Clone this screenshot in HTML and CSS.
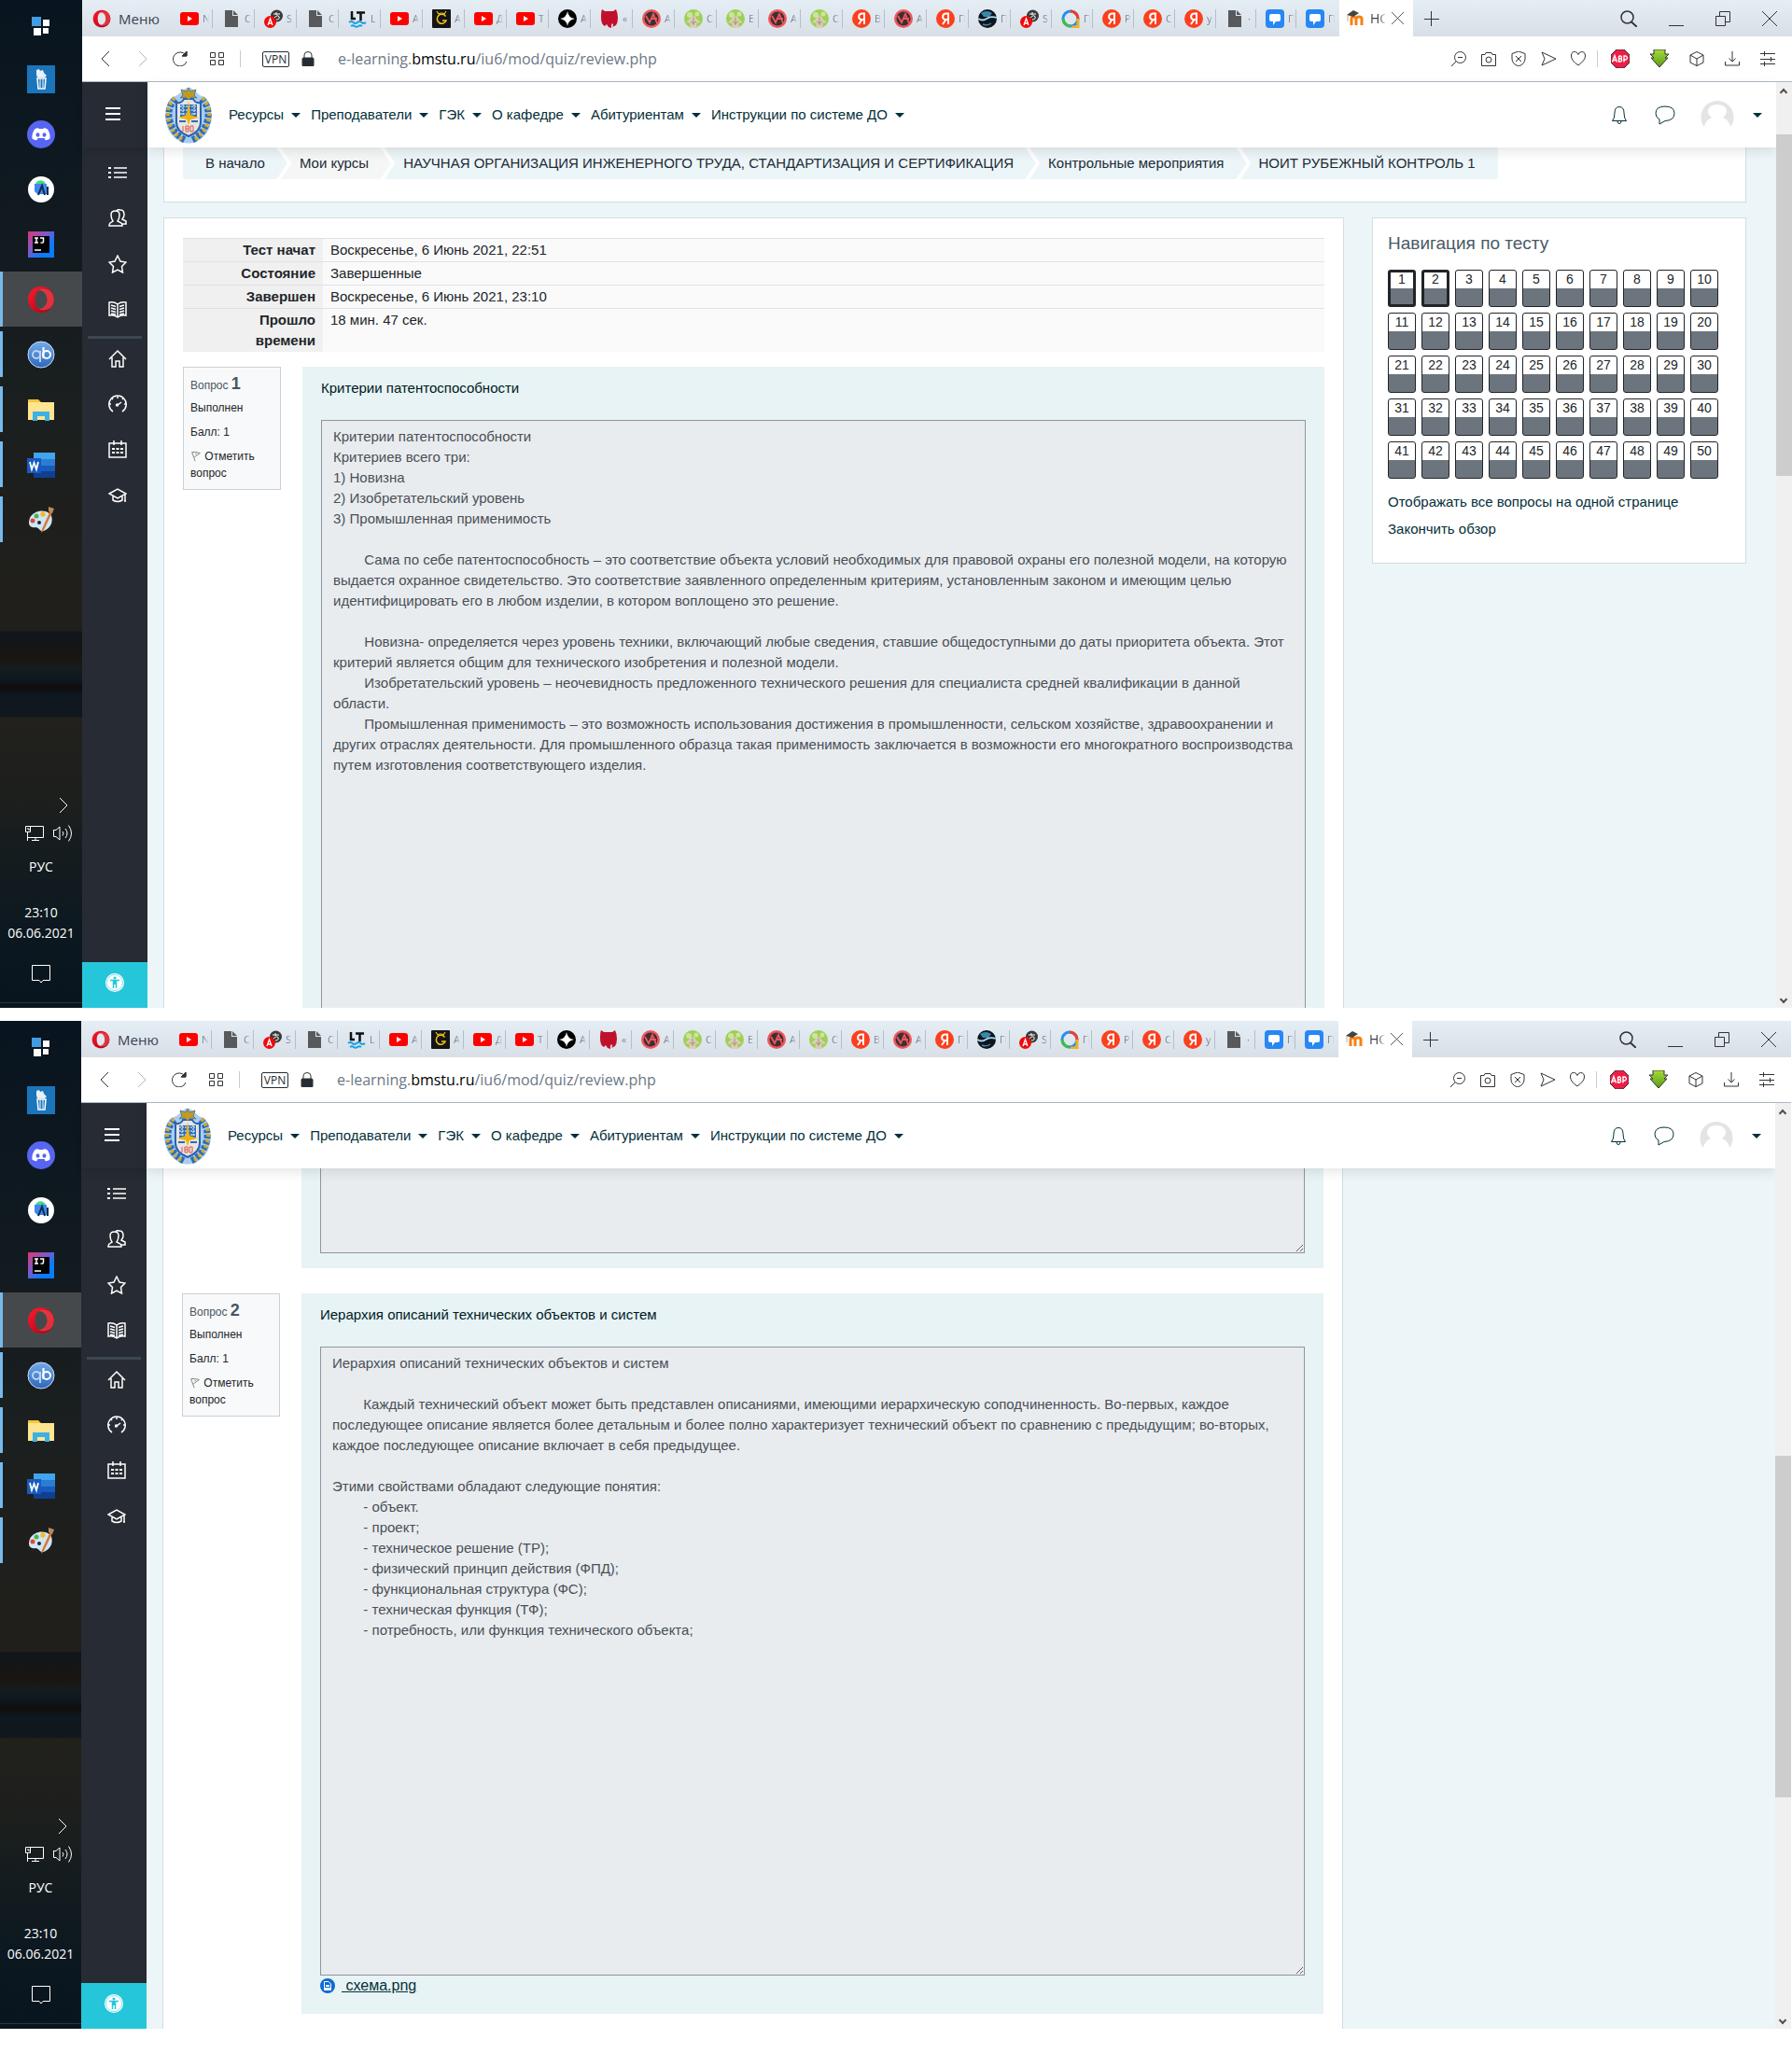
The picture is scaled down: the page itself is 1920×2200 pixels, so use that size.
FILE: index.html
```html
<!DOCTYPE html>
<html lang="ru">
<head>
<meta charset="utf-8">
<title>НОИТ РУБЕЖНЫЙ КОНТРОЛЬ 1</title>
<link rel="stylesheet" href="styles.css">
<script src="app.js" defer></script>
</head>
<body>
<svg class="defs" aria-hidden="true">
  <defs>
    <linearGradient id="gOpera" x1="0" y1="0" x2="1" y2="1"><stop offset="0" stop-color="#ff1b2d"/><stop offset="1" stop-color="#a70014"/></linearGradient>
    <linearGradient id="gIdea" x1="0" y1="0" x2="1" y2="1"><stop offset="0" stop-color="#e0356f"/><stop offset=".4" stop-color="#7d5ac8"/><stop offset=".7" stop-color="#087cfa"/></linearGradient>
    <linearGradient id="gQb" x1="0" y1="0" x2="0" y2="1"><stop offset="0" stop-color="#72abe8"/><stop offset="1" stop-color="#2f66bd"/></linearGradient>
    <linearGradient id="gDown" x1="0" y1="0" x2="0" y2="1"><stop offset="0" stop-color="#a4dc3c"/><stop offset="1" stop-color="#5c9a14"/></linearGradient>
  </defs>
  <symbol id="start" viewBox="0 0 20 20"><path d="M0 0h10v10H0z" fill="#429ce3"/><path d="M12 3h7v7h-7zM2 12h8v8H2zM12 12h6v6h-6z" fill="#fff"/></symbol>
  <symbol id="trash" viewBox="0 0 30 30"><path d="M0 0h30v30H0z" fill="#1b75bb"/><path d="M10 5l3-1 1 2 3-1 1 3 3 3-2 2h-8L10 10z" fill="#e8f1f8"/><path d="M11 14h9l-1 11h-7z" fill="none" stroke="#fff" stroke-width="1.500"/><path d="M14 14v10M17 14v10" stroke="#fff"/></symbol>
  <symbol id="discord" viewBox="0 0 30 30"><circle cx="15" cy="15" r="15" fill="#5865f2"/><path d="M8 9.500c3-2 4-1.500 5-.5h4c1-1 2-1.500 5 .5 2 3 3 7 2.500 10-2 1.500-4 2-5 1.500l-1-2h-7l-1 2c-1 .5-3 0-5-1.500C5 16.500 6 12.500 8 9.500z" fill="#fff"/><ellipse cx="11.500" cy="15.500" rx="2" ry="2.300" fill="#5865f2"/><ellipse cx="18.500" cy="15.500" rx="2" ry="2.300" fill="#5865f2"/></symbol>
  <symbol id="studio" viewBox="0 0 30 30"><circle cx="15" cy="15" r="14" fill="#fff"/><path d="M8 9h13v11H11l-3-3z" fill="#4285f4"/><path d="M9 9c2-5 9-5 11 0z" fill="#3ddc84"/><path d="M12 21l4-10 3 10M22 12v9" fill="none" stroke="#073042" stroke-width="2"/></symbol>
  <symbol id="idea" viewBox="0 0 30 30"><path d="M1 1h28v28H1z" fill="url(#gIdea)"/><path d="M6 6h18v18H6z" fill="#000"/><path d="M8 8h4M8 13h4M10 8v5M14 8h3.500v4q0 1.500-3 1M8 21h7" stroke="#fff" stroke-width="1.500" fill="none"/></symbol>
  <symbol id="opera" viewBox="0 0 30 30"><path fill-rule="evenodd" d="M15 1C7 1 1 7 1 15s6 14 14 14 14-6 14-14S23 1 15 1zm0 3.500c4 0 6.500 4.500 6.500 10.500S19 25.500 15 25.500 8.500 21 8.500 15 11 4.500 15 4.500z" fill="url(#gOpera)"/><path d="M12 5c4-3 10-1 13 1 5 5 5 14 0 18-4 3-9 3-13 1 6 0 9.500-5 9.500-10S18 5 12 5z" fill="#e8414b" opacity=".75"/></symbol>
  <symbol id="qb" viewBox="0 0 30 30"><circle cx="15" cy="15" r="14" fill="url(#gQb)" stroke="#c9ddf4"/><circle cx="10" cy="15" r="4" fill="none" stroke="#b9d4f2" stroke-width="2"/><path d="M14 11v12" stroke="#b9d4f2" stroke-width="2"/><path d="M17.500 7v12" stroke="#fff" stroke-width="2"/><circle cx="21" cy="15" r="4" fill="none" stroke="#fff" stroke-width="2"/></symbol>
  <symbol id="folder" viewBox="0 0 30 30"><path d="M1 4h11l3 3h14v19H1z" fill="#f5c63c"/><path d="M1 7h28v19H1z" fill="#ffe592"/><path d="M6 27V17h18v10h-5v-5h-8v5z" fill="#3db0e4"/></symbol>
  <symbol id="word" viewBox="0 0 30 30"><path d="M7 2h23v7H7z" fill="#41a5ee"/><path d="M7 9h23v7H7z" fill="#2b7cd3"/><path d="M7 16h23v6H7z" fill="#185abd"/><path d="M7 22h23v7H7z" fill="#103f91"/><path d="M0 8h15v16H0z" fill="#185abd"/><path d="M3 12l2 8 2.500-7L10 20l2-8" fill="none" stroke="#fff" stroke-width="1.800"/></symbol>
  <symbol id="paint" viewBox="0 0 30 30"><path d="M3 13C7 5 19 3 25 9c4 6 1 15-7 18-5 1-5-4-9-4-5 1-9-2-6-10z" fill="#cfe6f5"/><circle cx="6" cy="16" r="2.500" fill="#e2483c"/><circle cx="10" cy="11" r="2.500" fill="#4eb04a"/><circle cx="17" cy="9" r="2.700" fill="#f5b92a"/><circle cx="13" cy="18" r="2" fill="#1d2b38"/><path d="M25 5l2 2-9 19-3 3 1-4z" fill="#d9762e"/><path d="M23 1l6 2-2 5-4-2z" fill="#b98a5c"/></symbol>
  <symbol id="yt" viewBox="0 0 20 20"><rect y="3" width="20" height="14" rx="3" fill="#f00"/><path d="M8 7l5 3-5 3z" fill="#fff"/></symbol>
  <symbol id="doc" viewBox="0 0 20 20"><path d="M3 1h8v6h6v12H3zM12 1l5 5h-5z" fill="#58595b"/></symbol>
  <symbol id="tr" viewBox="0 0 20 20"><circle cx="13.500" cy="7" r="6.500" fill="#3a3a3a"/><path d="M10 5h7M13 3v3M11 9q4-4 5-1t-3 3" stroke="#fff" fill="none"/><circle cx="6.500" cy="13.500" r="6.500" fill="#f00a0a"/><path d="M4 17l2.500-7L9 17M5 15h3" stroke="#fff" stroke-width="1.300" fill="none"/></symbol>
  <symbol id="lt" viewBox="0 0 20 20"><path d="M4 2v8h4M9 3.500h9M13.500 3v9" stroke="#111" stroke-width="2.500" fill="none"/><path d="M1 14q2.500-2 4.500 0t4.500 0 4.500 0 4.500 0M3 18q2-1.500 4 0t4 0 4 0" stroke="#17a1e0" stroke-width="2" fill="none"/></symbol>
  <symbol id="gg" viewBox="0 0 20 20"><rect width="20" height="20" rx="1" fill="#151515"/><path d="M5 2l2 3q3-2 6 0l2-3" stroke="#eec21b" stroke-width="1.200" fill="none"/><path d="M14.500 7.500a5 5 0 1 0 .5 4.500h-4" stroke="#eec21b" stroke-width="1.600" fill="none"/></symbol>
  <symbol id="star4" viewBox="0 0 20 20"><circle cx="10" cy="10" r="10" fill="#000"/><path d="M10 2q1 7 8 8-7 1-8 8-1-7-8-8 7-1 8-8z" fill="#fff"/></symbol>
  <symbol id="cat" viewBox="0 0 20 20"><path d="M2 0l3 2h9l3-2q2 4 2 9t-2 8l-4 2q2-3 0-4-2 2-1 5l-3-1-2-3-2 2q-4-2-4-9T2 0z" fill="#c1102b"/></symbol>
  <symbol id="va" viewBox="0 0 20 20"><circle cx="10" cy="10" r="10" fill="#f0575c"/><circle cx="10" cy="10" r="7.500" fill="#3d3034"/><path d="M4 7l4 7 4-9 4 10M10 10h6" stroke="#f0575c" stroke-width="1.800" fill="none"/></symbol>
  <symbol id="tree" viewBox="0 0 20 20"><circle cx="10" cy="10" r="10" fill="#9fcf55"/><circle cx="6" cy="6" r="3" fill="#c9e79a"/><circle cx="14" cy="5" r="2.500" fill="#c9e79a"/><path d="M6 20l1-5-5-1 5-5 2-4 1 4 2-3 1 4 5 4-5 1 1 5z" fill="#dccdb6"/><path d="M10 9v8M7 13l3 2 3-2" stroke="#a08f74" fill="none"/></symbol>
  <symbol id="ya" viewBox="0 0 20 20"><circle cx="10" cy="10" r="10" fill="#fc3f1d"/><path d="M13 16V4.500h-2c-5 0-5 6.500-1 6.500h3M10.500 11L7 16" stroke="#fff" stroke-width="2" fill="none"/></symbol>
  <symbol id="disk" viewBox="0 0 20 20"><circle cx="10" cy="10" r="10" fill="#10141c"/><path d="M3 4q6-4 12 0l-3 4H6z" fill="#3c86ad"/><path d="M0 10q5 3 9 0t11-1" stroke="#a6dcf6" stroke-width="1.800" fill="none"/><path d="M5 16q5 2 9-1" stroke="#3c86ad" stroke-width="1.500" fill="none"/></symbol>
  <symbol id="ring" viewBox="0 0 20 20"><circle cx="10" cy="10" r="8" fill="none" stroke="#2a8cf0" stroke-width="3"/><path d="M10 2a8 8 0 0 1 8 8" stroke="#f03c2e" stroke-width="3" fill="none"/><path d="M2 10a8 8 0 0 0 8 8" stroke="#3cbf4a" stroke-width="3" fill="none"/><path d="M18 10v9h-7" stroke="#f2b01e" stroke-width="3" fill="none"/></symbol>
  <symbol id="msg" viewBox="0 0 20 20"><rect width="20" height="20" rx="4" fill="#2787f5"/><path d="M6 5h8q2 0 2 2v4q0 2-2 2h-3l-3 4v-4H6q-2 0-2-2V7q0-2 2-2z" fill="#fff"/></symbol>
  <symbol id="moodle" viewBox="0 0 20 20"><path d="M5 17v-7q0-2 2-2t3 2v7m0-7q0-2 3-2t3 2v7" stroke="#f98012" stroke-width="3" fill="none"/><path d="M0 6l7-5 6 3-6 4z" fill="#444"/><path d="M1 6v7" stroke="#c9a98a"/></symbol>
  <symbol id="crest" viewBox="0 0 52 62">
    <path d="M20 5q6-7 12 0l6 5q8 2 11 10 3 12 1 20-3 14-16 20-8 3-16 0Q5 54 2 40 0 32 3 20q3-8 11-10z" fill="#a9cdf0"/>
    <path d="M12 14Q2 24 6 38q4 14 16 20M40 14q10 10 6 24-4 14-16 20" fill="none" stroke="#2a6cb8" stroke-width="7" stroke-dasharray="4 2"/>
    <path d="M11 13Q1 24 5 38q4 14 16 20M41 13q10 11 6 25-4 14-16 20" fill="none" stroke="#d6ab25" stroke-width="4" stroke-dasharray="3 3"/>
    <path d="M13 18q6 1 8-4h10q2 5 8 4v21q0 10-13 15-13-5-13-15z" fill="#e8e4e2" stroke="#2a62b0" stroke-width="2"/>
    <path d="M17 20h18v13H17z" fill="#2a6cb8"/><path d="M17 22h18M17 26h18M17 30h18M20 20v12M32 20v12" stroke="#fff" stroke-dasharray="2 1"/>
    <path d="M26 16l2 15 9 3-9 2-2 6-2-6-9-2 9-3z" fill="#efb40c"/><path d="M16 38h7M29 38h7" stroke="#2a6cb8" stroke-width="2"/>
    <path d="M20 43v6M23 43h3v6h-3zM28 43h3v6h-3zM23 46h3" stroke="#dd5349" fill="none"/>
    <path d="M26 2l2 4 6-2-2 6 3 3-6-1-3 3-3-3-6 1 3-3-2-6 6 2z" fill="#c39a20" stroke="#5b7b8f"/>
  </symbol>
  <symbol id="list" viewBox="0 0 20 20"><path d="M0 5h3M0 10h3M0 15h3" stroke-width="2"/><path d="M6 5h14M6 10h14M6 15h14"/></symbol>
  <symbol id="users" viewBox="0 0 20 20"><path d="M5 13Q3 10 3 6q0-4 4.500-4T12 6q0 4-2 7l4 2q1 1 1 3H1q0-2 1-3zM9 2q1-2 4-1 4 0 4 5 0 3-2 5l4 2v3h-4"/></symbol>
  <symbol id="star" viewBox="0 0 20 20"><path d="M10 1l3 6 6 1-4.500 4.500 1 6.500-5.500-3-5.500 3 1-6.500L1 8l6-1z"/></symbol>
  <symbol id="book" viewBox="0 0 20 20"><path d="M10 4Q6 1 1 2v14q5-1 9 2 4-3 9-2V2q-5-1-9 2v14M3 5l5 1.500M3 8l5 1.500M3 11l5 1.500M3 14l5 1M17 5l-5 1.500M17 8l-5 1.500M17 11l-5 1.500M17 14l-5 1"/></symbol>
  <symbol id="home" viewBox="0 0 20 20"><path d="M1 11l9-9 9 9M4 9v10h4v-6h4v6h4V9"/></symbol>
  <symbol id="gauge" viewBox="0 0 20 20"><path d="M5 18A9.200 9.200 0 1 1 15 18M10 11l4-3M10 2v2M1 10h2M17 10h2M4 4l1 1M16 4l-1 1"/><circle cx="9.500" cy="11" r="1"/></symbol>
  <symbol id="cal" viewBox="0 0 20 20"><path d="M1 3h18v15H1zM6 0v5M14 0v5"/><path d="M4 9h3M8.500 9h3M13 9h3M4 13h3M8.500 13h3M13 13h3" stroke-width="2"/></symbol>
  <symbol id="cap" viewBox="0 0 20 20"><path d="M1 8l9-5 9 5-9 5zM5 11v4q5 3 10 0v-4M18 9v7M17 16h2"/></symbol>
  <symbol id="a11y" viewBox="0 0 20 20"><circle cx="10" cy="10" r="10" fill="#fff"/><circle cx="10" cy="10" r="8.500" fill="none" stroke="#8be2ec" stroke-width="1"/><circle cx="10" cy="5" r="1.500" fill="#26c6da"/><path d="M5 7.500l10 0M8.500 8v8M11.500 8v8" stroke="#26c6da" stroke-width="1.500"/><path d="M8 7h4v5H8z" fill="#26c6da"/></symbol>
  <symbol id="back" viewBox="0 0 16 16"><path d="M12 0L4 8l8 8"/></symbol>
  <symbol id="fwd" viewBox="0 0 16 16"><path d="M4 0l8 8-8 8"/></symbol>
  <symbol id="reload" viewBox="0 0 16 16"><path d="M14 4A7.500 7.500 0 1 0 15 11M15 0v5h-5"/><path d="M15 0v5h-5z" fill="#333"/></symbol>
  <symbol id="grid" viewBox="0 0 16 16"><path d="M.5 1.500h5v5h-5zM9.500 1.500h5v5h-5zM.5 9.500h5v5h-5zM9.500 9.500h5v5h-5z"/></symbol>
  <symbol id="lock" viewBox="0 0 14 16"><path d="M3 7V4q0-3.500 4-3.500T11 4v3"/><rect x="1" y="7" width="12" height="9" rx="1" fill="#252c34"/></symbol>
  <symbol id="zoomout" viewBox="0 0 16 16"><circle cx="9.500" cy="6.500" r="6"/><path d="M5 11l-5 5M7 6.500h5"/></symbol>
  <symbol id="cam" viewBox="0 0 16 16"><path d="M.5 3.500H4l1-2h6l1 2h3.500v12H.5z"/><circle cx="8" cy="9" r="3"/></symbol>
  <symbol id="shield" viewBox="0 0 16 16"><path d="M8 0l7 2.500V8q0 5.500-7 8-7-2.500-7-8V2.500zM5 5l6 6M11 5l-6 6"/></symbol>
  <symbol id="send" viewBox="0 0 16 16"><path d="M1 1l15 7-15 7 3-7z"/></symbol>
  <symbol id="heart" viewBox="0 0 16 16"><path d="M8 15Q.5 10 .5 5t4-4.500Q7 .5 8 3.500 9 .5 11.500.5q4 0 4 4.500T8 15z"/></symbol>
  <symbol id="abp" viewBox="0 0 20 20"><path d="M6 0h8l6 6v8l-6 6H6l-6-6V6z" fill="#ed1e45"/><path d="M1.500 13.500l2.500-7 2.500 7M2.500 11.500h3M8.500 7v6h2q2.500-1.500 0-3h-2M8.500 7h2q2 1.500 0 3M14 13.500V7h2q3 2 0 4h-2" fill="none" stroke="#fff" stroke-width="1.400"/></symbol>
  <symbol id="green" viewBox="0 0 20 20"><path d="M4 0h12v5h4l-4 4h3l-9 10L1 9h3L0 5h4z" fill="url(#gDown)"/></symbol>
  <symbol id="cube" viewBox="0 0 16 16"><path d="M8 .5l7 3.500v8l-7 3.500L1 12V4zM1 4l7 4 7-4M8 8v8"/></symbol>
  <symbol id="dl" viewBox="0 0 16 16"><path d="M8 0v11M4.500 7.500L8 11l3.500-3.500M.5 11v4h15v-4"/></symbol>
  <symbol id="sliders" viewBox="0 0 16 16"><path d="M0 2.500h16M0 8.500h16M0 13.500h16M4.500 0v5M11.500 6v5M4.500 11v5"/></symbol>
  <symbol id="search" viewBox="0 0 18 18"><circle cx="7.500" cy="7.500" r="6.500" stroke-width="1.500"/><path d="M12 12.500l6 5.500" stroke-width="2"/></symbol>
  <symbol id="min" viewBox="0 0 16 16"><path d="M0 15.500h16"/></symbol>
  <symbol id="restore" viewBox="0 0 16 16"><path d="M.5 5.500h10v10H.5zM4.500 5V.5h11v11H11"/></symbol>
  <symbol id="close" viewBox="0 0 16 16"><path d="M0 0l16 16M16 0L0 16"/></symbol>
  <symbol id="plus" viewBox="0 0 16 16"><path d="M0 8.500h16M7.500 0v16"/></symbol>
  <symbol id="bell" viewBox="0 0 22 22"><path d="M4 17.500h14.500Q16 15 16 9q0-6.500-5-6.500T6 9q0 6-2.500 8.500zM9 18q0 2.500 2 2.500t2-2.500"/></symbol>
  <symbol id="chat" viewBox="0 0 22 22"><path d="M11 2Q21 2 21 9.500T11 17.500L5 21l0-5Q1 14 1 9.500 1 2 11 2z"/></symbol>
  <symbol id="avatar" viewBox="0 0 36 36"><path d="M4 31A17.500 17.500 0 1 1 32 31Q31 24 24 21q4-3 4-7-1-7-10-7T8 14q0 4 4 7-7 3-8 10z" fill="#e4e4e4"/></symbol>
  <symbol id="monitor" viewBox="0 0 20 16"><path d="M4 .5h15.500v12H2.500V7M.5.5h5v6h-5zM11 13v3M7 15.500h8M2.500 12v4M2 3h2v2"/></symbol>
  <symbol id="sound" viewBox="0 0 20 18"><path d="M0 5.500h3L7 2v14l-4-3.500H.5v-7M10 7q2 2 0 4.500M13 4q4 5 0 10M16.500.5q6 8.500 0 17"/></symbol>
  <symbol id="note" viewBox="0 0 20 20"><path d="M.5.500h19v16H12l-2 2.500-2-2.500H.5z"/></symbol>
  <symbol id="flag" viewBox="0 0 12 16"><path d="M1 3l4 11M1 3q4-1 10 1L4 9M6 4v2" stroke="#777"/></symbol>
  <symbol id="file" viewBox="0 0 16 16"><circle cx="8" cy="8" r="8" fill="#0d6ad0"/><path d="M4.500 3.500H9l2.500 2.500v6.500h-7z" stroke="#fff" fill="none"/><path d="M5 11h6M6 8h4" stroke="#fff" stroke-width="2"/></symbol>
  <symbol id="chev" viewBox="0 0 18 34"><path d="M0 0l12 17L0 34z" fill="var(--from)"/><path d="M2-1l12 18L2 35" fill="none" stroke="#fff" stroke-width="4"/></symbol>
</svg>

<template id="taskbar-template">
  <div class="apps">
    <button class="app" aria-label="Пуск"><svg class="i20"><use href="#start"/></svg></button>
    <button class="app" aria-label="Корзина"><svg class="i30"><use href="#trash"/></svg></button>
    <button class="app" aria-label="Discord"><svg class="i30"><use href="#discord"/></svg></button>
    <button class="app" aria-label="Android Studio"><svg class="i30"><use href="#studio"/></svg></button>
    <button class="app" aria-label="IntelliJ IDEA"><svg class="i30"><use href="#idea"/></svg></button>
    <button class="app app-open app-active" aria-label="Opera"><svg class="i30"><use href="#opera"/></svg></button>
    <button class="app app-open" aria-label="qBittorrent"><svg class="i30"><use href="#qb"/></svg></button>
    <button class="app app-open" aria-label="Проводник"><svg class="i30"><use href="#folder"/></svg></button>
    <button class="app app-open" aria-label="Word"><svg class="i30"><use href="#word"/></svg></button>
    <button class="app app-open" aria-label="Paint"><svg class="i30"><use href="#paint"/></svg></button>
  </div>
  <div class="tray">
    <button class="tray-more line" aria-label="Скрытые значки"><svg class="i16"><use href="#fwd"/></svg></button>
    <div class="tray-row line"><svg class="i20"><use href="#monitor"/></svg><svg class="i20"><use href="#sound"/></svg></div>
    <div class="tray-lang">РУС</div>
    <div class="tray-clock">23:10<br>06.06.2021</div>
    <button class="tray-note line" aria-label="Уведомления"><svg class="i20"><use href="#note"/></svg></button>
  </div>
</template>

<template id="chrome-template">
  <div class="tabbar">
    <button class="menu"><svg class="i20"><use href="#opera"/></svg>Меню</button>
    <div class="tabs"></div>
    <div class="tab-active"><svg class="i20"><use href="#moodle"/></svg><span class="tab-title">НО</span><svg class="i13 line"><use href="#close"/></svg></div>
    <button class="tab-new line" aria-label="Новая вкладка"><svg class="i16"><use href="#plus"/></svg></button>
    <div class="win line">
      <button aria-label="Поиск"><svg class="i18"><use href="#search"/></svg></button>
      <button aria-label="Свернуть"><svg class="i16"><use href="#min"/></svg></button>
      <button aria-label="Восстановить"><svg class="i16"><use href="#restore"/></svg></button>
      <button aria-label="Закрыть"><svg class="i16"><use href="#close"/></svg></button>
    </div>
  </div>
  <div class="toolbar line">
    <div class="tools-left">
      <button aria-label="Назад"><svg class="i16"><use href="#back"/></svg></button>
      <button aria-label="Вперёд" class="dim"><svg class="i16"><use href="#fwd"/></svg></button>
      <button aria-label="Обновить"><svg class="i16"><use href="#reload"/></svg></button>
      <button aria-label="Экспресс-панель"><svg class="i16"><use href="#grid"/></svg></button>
    </div>
    <span class="rule"></span>
    <span class="vpn">VPN</span>
    <svg class="i16 lock"><use href="#lock"/></svg>
    <div class="url">e-learning.<b>bmstu.ru</b>/iu6/mod/quiz/review.php</div>
    <div class="tools-right">
      <svg class="i16"><use href="#zoomout"/></svg><svg class="i16"><use href="#cam"/></svg><svg class="i16"><use href="#shield"/></svg><svg class="i16"><use href="#send"/></svg><svg class="i16"><use href="#heart"/></svg>
    </div>
    <span class="rule"></span>
    <div class="extensions">
      <svg class="i20"><use href="#abp"/></svg><svg class="i20"><use href="#green"/></svg><svg class="i16"><use href="#cube"/></svg><svg class="i16"><use href="#dl"/></svg><svg class="i16"><use href="#sliders"/></svg>
    </div>
  </div>
</template>

<template id="drawer-template">
  <button class="burger" aria-label="Меню"><span></span><span></span><span></span></button>
  <nav class="drawer-nav">
    <a href="#" aria-label="Разделы"><svg class="i20"><use href="#list"/></svg></a>
    <a href="#" aria-label="Участники"><svg class="i20"><use href="#users"/></svg></a>
    <a href="#" aria-label="Значки"><svg class="i20"><use href="#star"/></svg></a>
    <a href="#" aria-label="Оценки"><svg class="i20"><use href="#book"/></svg></a>
    <hr>
    <a href="#" aria-label="Домой"><svg class="i20"><use href="#home"/></svg></a>
    <a href="#" aria-label="Личный кабинет"><svg class="i20"><use href="#gauge"/></svg></a>
    <a href="#" aria-label="Календарь"><svg class="i20"><use href="#cal"/></svg></a>
    <a href="#" aria-label="Мои курсы"><svg class="i20"><use href="#cap"/></svg></a>
  </nav>
  <button class="access" aria-label="Специальные возможности"><svg class="i20"><use href="#a11y"/></svg></button>
</template>

<template id="header-template">
  <a href="#" aria-label="МГТУ"><svg class="crest"><use href="#crest"/></svg></a>
  <nav class="topnav">
    <a href="#">Ресурсы</a><a href="#">Преподаватели</a><a href="#">ГЭК</a><a href="#">О кафедре</a><a href="#">Абитуриентам</a><a href="#">Инструкции по системе ДО</a>
  </nav>
  <div class="user">
    <svg class="i22"><use href="#bell"/></svg><svg class="i22"><use href="#chat"/></svg><button class="account" aria-label="Профиль"><svg class="i36"><use href="#avatar"/></svg></button>
  </div>
</template>

<section class="screen screen-top">
  <aside class="taskbar" data-template="taskbar-template"></aside>
  <div class="browser">
    <div data-template="chrome-template"></div>
    <div class="page">
      <aside class="drawer" data-template="drawer-template"></aside>
      <div class="site">
        <header class="header" data-template="header-template"></header>
        <main class="content">
          <div class="card crumbs-card">
            <nav class="crumbs">
              <a href="#">В начало</a><svg class="chev to-grey"><use href="#chev"/></svg><a href="#" class="grey">Мои курсы</a><svg class="chev from-grey"><use href="#chev"/></svg><a href="#">НАУЧНАЯ ОРГАНИЗАЦИЯ ИНЖЕНЕРНОГО ТРУДА, СТАНДАРТИЗАЦИЯ И СЕРТИФИКАЦИЯ</a><svg class="chev"><use href="#chev"/></svg><a href="#">Контрольные мероприятия</a><svg class="chev"><use href="#chev"/></svg><a href="#">НОИТ РУБЕЖНЫЙ КОНТРОЛЬ 1</a>
            </nav>
          </div>
          <div class="columns">
            <div class="card quiz">
              <table class="summary">
                <tr><th>Тест начат</th><td>Воскресенье, 6 Июнь 2021, 22:51</td></tr>
                <tr><th>Состояние</th><td>Завершенные</td></tr>
                <tr><th>Завершен</th><td>Воскресенье, 6 Июнь 2021, 23:10</td></tr>
                <tr><th>Прошло<br>времени</th><td>18 мин. 47 сек.</td></tr>
              </table>
              <div class="question">
                <div class="info">
                  <h3>Вопрос <b>1</b></h3>
                  <p>Выполнен</p>
                  <p>Балл: 1</p>
                  <a href="#"><svg class="flag"><use href="#flag"/></svg> Отметить вопрос</a>
                </div>
                <div class="formulation">
                  <label for="a1">Критерии патентоспособности</label>
                  <textarea id="a1" class="answer answer-open" readonly>Критерии патентоспособности
Критериев всего три:
1) Новизна
2) Изобретательский уровень
3) Промышленная применимость

        Сама по себе патентоспособность – это соответствие объекта условий необходимых для правовой охраны его полезной модели, на которую
выдается охранное свидетельство. Это соответствие заявленного определенным критериям, установленным законом и имеющим целью
идентифицировать его в любом изделии, в котором воплощено это решение.

        Новизна- определяется через уровень техники, включающий любые сведения, ставшие общедоступными до даты приоритета объекта. Этот
критерий является общим для технического изобретения и полезной модели.
        Изобретательский уровень – неочевидность предложенного технического решения для специалиста средней квалификации в данной
области.
        Промышленная применимость – это возможность использования достижения в промышленности, сельском хозяйстве, здравоохранении и
других отраслях деятельности. Для промышленного образца такая применимость заключается в возможности его многократного воспроизводства
путем изготовления соответствующего изделия.</textarea>
                </div>
              </div>
            </div>
            <aside class="card quiznav">
              <h2>Навигация по тесту</h2>
              <div class="numbers"></div>
              <a href="#">Отображать все вопросы на одной странице</a>
              <a href="#">Закончить обзор</a>
            </aside>
          </div>
        </main>
      </div>
      <div class="scrollbar"><span class="arrow-up"></span><span class="thumb"></span><span class="arrow-down"></span></div>
    </div>
  </div>
</section>

<section class="screen screen-bottom">
  <aside class="taskbar" data-template="taskbar-template"></aside>
  <div class="browser">
    <div data-template="chrome-template"></div>
    <div class="page">
      <aside class="drawer" data-template="drawer-template"></aside>
      <div class="site">
        <header class="header" data-template="header-template"></header>
        <main class="content">
          <div class="columns">
            <div class="card quiz">
              <div class="question">
                <div class="formulation formulation-tail">
                  <textarea class="answer answer-tail" aria-label="Ответ на вопрос 1" readonly></textarea>
                </div>
              </div>
              <div class="question">
                <div class="info">
                  <h3>Вопрос <b>2</b></h3>
                  <p>Выполнен</p>
                  <p>Балл: 1</p>
                  <a href="#"><svg class="flag"><use href="#flag"/></svg> Отметить вопрос</a>
                </div>
                <div class="formulation">
                  <label for="a2">Иерархия описаний технических объектов и систем</label>
                  <textarea id="a2" class="answer answer-full" readonly>Иерархия описаний технических объектов и систем

        Каждый технический объект может быть представлен описаниями, имеющими иерархическую соподчиненность. Во-первых, каждое
последующее описание является более детальным и более полно характеризует технический объект по сравнению с предыдущим; во-вторых,
каждое последующее описание включает в себя предыдущее.

Этими свойствами обладают следующие понятия:
        - объект.
        - проект;
        - техническое решение (ТР);
        - физический принцип действия (ФПД);
        - функциональная структура (ФС);
        - техническая функция (ТФ);
        - потребность, или функция технического объекта;</textarea>
                  <div class="attachment"><svg class="i16"><use href="#file"/></svg><a href="#">&nbsp;схема.png</a></div>
                </div>
              </div>
            </div>
          </div>
        </main>
      </div>
      <div class="scrollbar"><span class="arrow-up"></span><span class="thumb"></span><span class="arrow-down"></span></div>
    </div>
  </div>
</section>
</body>
</html>
```
FILE: app.js
```js
// Fill the shared parts of both windows.
document.querySelectorAll('[data-template]').forEach(function (host) {
  host.append(document.getElementById(host.dataset.template).content.cloneNode(true));
});

// Background tabs: icon and the first letter of the title.
var tabs = ['yt N', 'doc С', 'tr S', 'doc С', 'lt L', 'yt А', 'gg А', 'yt Д', 'yt Т', 'star4 А', 'cat «', 'va А', 'tree О', 'tree Е',
  'va А', 'tree О', 'ya В', 'va А', 'ya П', 'disk П', 'tr S', 'ring П', 'ya Р', 'ya С', 'ya у', 'doc \u00b7', 'msg П', 'msg П'];
document.querySelectorAll('.tabs').forEach(function (bar) {
  bar.innerHTML = tabs.map(function (tab) {
    var part = tab.split(' ');
    return '<div class="tab"><svg class="i20"><use href="#' + part[0] + '"/></svg><span>' + part[1] + '</span></div>';
  }).join('');
});

// Question buttons of the quiz navigation.
var numbers = document.querySelector('.numbers');
for (var n = 1; n <= 50; n++) {
  var link = document.createElement('a');
  link.href = '#';
  link.textContent = n;
  if (n < 3) link.className = 'this-page';
  numbers.append(link);
}
```
FILE: styles.css
```css
* { box-sizing: border-box; }
body { margin: 0; background: #fff; font: 15px/22px "Liberation Sans", Arial, sans-serif; color: #212529; }
a { color: #04303a; text-decoration: none; }
button { margin: 0; padding: 0; border: 0; background: none; font: inherit; color: inherit; }
svg { display: block; flex: none; overflow: visible; }
.defs { position: absolute; width: 0; height: 0; }
.i13 { width: 13px; height: 13px; }
.i16 { width: 16px; height: 16px; }
.i18 { width: 18px; height: 18px; }
.i20 { width: 20px; height: 20px; }
.i22 { width: 22px; height: 22px; }
.i30 { width: 30px; height: 30px; }
.i36 { width: 36px; height: 36px; }
.line { fill: none; stroke: #333; }

.screen { display: flex; }
.screen-bottom { margin: 14px 1px 26px 0; }
.browser { flex: 1; min-width: 0; display: flex; flex-direction: column; }
.page { flex: 1; display: flex; }

/* Desktop taskbar */
.taskbar { width: 88px; display: flex; flex-direction: column; justify-content: space-between; color: #fff;
  background: linear-gradient(#08141f 0, #111a20 240px, #1b1f1f 440px, #211f1b 676px, #0f161b 677px, #1a1512 706px, #161c1e 716px, #0e1820 728px, #100d0b 736px, #0e1820 746px, #11181d 768px, #22211c 769px, #1d1f1d 850px, #141c1f 920px, #0c1820 1000px, #08151e 1074px, #2b353b 1074px, #2b353b 1075px, #08151e 1075px); }
.screen-bottom .taskbar { width: 87px; }
.app { display: flex; align-items: center; justify-content: center; width: 100%; height: 59px; border-left: 3px solid transparent; padding-right: 3px; }
.app:first-child { height: 55px; }
.app-open { border-image: linear-gradient(transparent 5px, #76b9ed 5px, #76b9ed 54px, transparent 54px) 0 0 0 3; }
.app-active { background: #45494b; border-image: linear-gradient(#76b9ed, #76b9ed) 0 0 0 3; }
.tray { display: flex; flex-direction: column; align-items: center; font: 14px/22px "Open Sans", "Noto Sans", sans-serif; padding-bottom: 26px; }
.tray .line { stroke: #fff; }
.tray-more { align-self: flex-end; padding-right: 12px; }
.tray-row { display: flex; gap: 10px; padding-left: 16px; margin-top: 12px; }
.tray-lang { margin-top: 15px; }
.tray-clock { text-align: center; margin-top: 27px; }
.tray-note { margin-top: 23px; }

/* Browser window */
.tabbar { display: flex; height: 39px; background: linear-gradient(#e5edf5, #d8dfe7); font: 16px/24px "Open Sans", "Noto Sans", sans-serif; color: #3a4450; }
.menu { display: flex; align-items: center; gap: 8px; width: 94px; padding-left: 11px; font-size: 15px; }
.tabs { display: flex; align-items: center; padding-right: 4px; }
.tab { display: flex; align-items: center; width: 45px; height: 20px; padding-left: 10px; border-left: 1px solid #b3bfcc; }
.tab:first-child { border-color: transparent; }
.tab:nth-child(n+21) { width: 44px; }
.tab:nth-child(n+26) { width: 43px; }
.tab span { width: 9px; margin-left: 4px; font-size: 11px; line-height: 20px; color: #7b8794; -webkit-mask-image: linear-gradient(90deg, #000 3px, transparent 7px); mask-image: linear-gradient(90deg, #000 3px, transparent 7px); }
.tab-active { display: flex; align-items: center; width: 79px; padding-left: 8px; background: #fff; font-size: 14px; }
.tab-title { width: 22px; margin: 0 1px 0 5px; -webkit-mask-image: linear-gradient(90deg, #000 10px, transparent 17px); mask-image: linear-gradient(90deg, #000 10px, transparent 17px); }
.tab-new { margin-left: 12px; }
.win { display: flex; align-items: center; gap: 34px; margin-left: auto; padding-right: 16px; }
.toolbar { display: flex; align-items: center; height: 49px; padding-right: 18px; background: #fff; border-bottom: 1px solid #adb9c5; }
.tools-left { display: flex; gap: 24px; padding-left: 17px; }
.dim { opacity: .35; }
.rule { width: 1px; height: 18px; background: #c5ccd3; }
.tools-left + .rule { margin: 0 23px 0 16px; }
.vpn { width: 29px; height: 17px; border: 1px solid #252c34; border-radius: 2px; font: 12px/15px "Open Sans", "Noto Sans", sans-serif; text-align: center; color: #252c34; }
.lock { margin: 0 24px 0 12px; }
.url { flex: 1; font: 16px/22px "Open Sans", "Noto Sans", sans-serif; color: #6c7886; }
.url b { font-weight: 400; color: #000; }
.tools-right { display: flex; gap: 16px; padding-right: 12px; }
.extensions { display: flex; align-items: center; gap: 22px; padding-left: 14px; }

/* Site drawer and header */
.drawer { width: 70px; display: flex; flex-direction: column; background: #272b33; }
.burger { display: flex; flex-direction: column; align-items: center; justify-content: center; gap: 4px; height: 70px; padding-right: 4px; padding-bottom: 2px; box-shadow: 0 4px 8px rgba(0, 0, 0, .12); }
.burger span { width: 16px; height: 2px; background: #fff; }
.drawer-nav { display: flex; flex-direction: column; align-items: center; padding: 2px 0 0 6px; }
.drawer-nav a { display: flex; align-items: center; height: 49px; fill: none; stroke: #fff; stroke-width: 1.5; }
.drawer-nav hr { width: 58px; height: 3px; margin: 4px 6px -4px 0; border: 0; background: #3a4750; }
.access { display: flex; justify-content: center; align-items: center; height: 49px; margin-top: auto; padding-bottom: 6px; background: #26c6da; }
.site { flex: 1; min-width: 0; display: flex; flex-direction: column; background: #ecf5f8; }
.header { position: relative; display: flex; align-items: center; height: 70px; padding: 0 15px 0 18px; background: #fff; box-shadow: 0 4px 12px rgba(0, 0, 0, .1); }
.crest { width: 52px; height: 62px; }
.topnav { display: flex; gap: 11px; margin-left: 17px; }
.topnav a { display: flex; align-items: center; gap: 8px; font-size: 15px; }
.topnav a::after, .account::after { content: ""; border: 5px solid transparent; border-top-color: #04303a; border-bottom: 0; }
.user { display: flex; align-items: center; gap: 27px; margin-left: auto; fill: none; stroke: #04303a; }
.account { display: flex; align-items: center; gap: 20px; stroke: none; }

/* Content */
.content { flex: 1; display: flex; flex-direction: column; padding: 0 32px 0 17px; }
.card { background: #fff; border: 1px solid #d3dee2; }
.crumbs-card { margin-bottom: 16px; padding: 0 20px 24px; border-top: 0; }
.crumbs { display: flex; height: 34px; font-size: 15px; line-height: 34px; white-space: nowrap; }
.crumbs a { padding: 0 12px 0 7px; background: #ecf5f8; color: #212b36; }
.crumbs a:first-child { padding-left: 24px; border-radius: 0 0 0 3px; }
.crumbs a:last-child { padding-right: 24px; border-radius: 0 0 3px 0; }
.crumbs .grey { background: #f5f6f6; }
.chev { width: 18px; height: 34px; overflow: hidden; background: #ecf5f8; --from: #ecf5f8; }
.to-grey { background: #f5f6f6; }
.from-grey { --from: #f5f6f6; }
.columns { flex: 1; display: grid; grid-template-columns: minmax(0, 1fr) 401px; gap: 30px; }
.quiz { padding: 21px 20px 0; border-bottom: 0; }
.screen-bottom .quiz { padding-top: 0; border-top: 0; padding-bottom: 16px; }
.summary { width: 100%; border-collapse: collapse; margin-bottom: 16px; }
.summary tr { border-top: 1px solid #dee2e6; }
.summary th { width: 150px; padding: 1px 8px; text-align: right; vertical-align: top; background: #f0f0f0; }
.summary td { padding: 1px 8px; vertical-align: top; background: #fafafa; }
.question { display: grid; grid-template-columns: 105px minmax(0, 1fr); gap: 23px; align-items: start; }
.question + .question { margin-top: 27px; }
.info { height: 132px; padding: 9px 7px; border: 1px solid #cad0d7; background: #f8f9fa; font-size: 12px; line-height: 18px; color: #212529; }
.info h3 { margin: 0 0 6px; font-size: 12px; font-weight: 400; line-height: 18px; color: #4a5560; }
.info h3 b { font-size: 18px; line-height: 16px; }
.info p { margin: 0 0 8px; }
.info a { color: #212529; }
.flag { display: inline-block; width: 12px; height: 14px; vertical-align: -3px; fill: none; }
.formulation { grid-column: 2; padding: 12px 20px 0; background: #e7f3f5; color: #001a1e; }
.formulation label { display: block; margin-bottom: 23px; }
.formulation-tail { padding: 0 20px 16px; }
.answer { display: block; width: 100%; padding: 6px 12px; border: 1px solid #8f959e; border-radius: 0; background: #e9ecef; color: #495057; font: inherit; outline: 0; overflow: hidden; resize: vertical; white-space: pre; }
.answer-open { height: 630px; border-bottom: 0; resize: none; }
.answer-tail { height: 91px; border-top: 0; }
.answer-full { height: 674px; }
.attachment { display: flex; align-items: center; gap: 7px; height: 41px; padding-bottom: 19px; font-size: 16px; }
.attachment a { text-decoration: underline; }
.quiznav { align-self: start; padding: 15px 16px 22px; }
.quiznav h2 { margin: 0 0 16px; font-size: 19px; font-weight: 400; line-height: 24px; color: #4a5a66; }
.numbers { display: grid; grid-template-columns: repeat(10, 30px); gap: 6px; margin-bottom: 10px; }
.numbers a { height: 40px; border: 1px solid #212529; border-radius: 3px; background: linear-gradient(#fff 19px, #6c757d 19px); font-size: 14px; line-height: 18px; text-align: center; color: #212529; }
.numbers .this-page { border-width: 3px; background: linear-gradient(#fff 17px, #6c757d 17px); line-height: 14px; }
.quiznav > a { display: block; height: 29px; line-height: 29px; }

/* Page scrollbar */
.scrollbar { position: relative; width: 17px; background: #f0f0f0; }
.arrow-up, .arrow-down { position: absolute; left: 5px; width: 6px; height: 6px; border: solid #505050; border-width: 2px 0 0 2px; transform: rotate(45deg); }
.arrow-up { top: 8px; }
.arrow-down { bottom: 6px; transform: rotate(225deg); }
.thumb { position: absolute; top: 56px; left: 0; right: 0; height: 366px; background: #cdcdcd; }
.screen-bottom .thumb { top: 378px; }
```
